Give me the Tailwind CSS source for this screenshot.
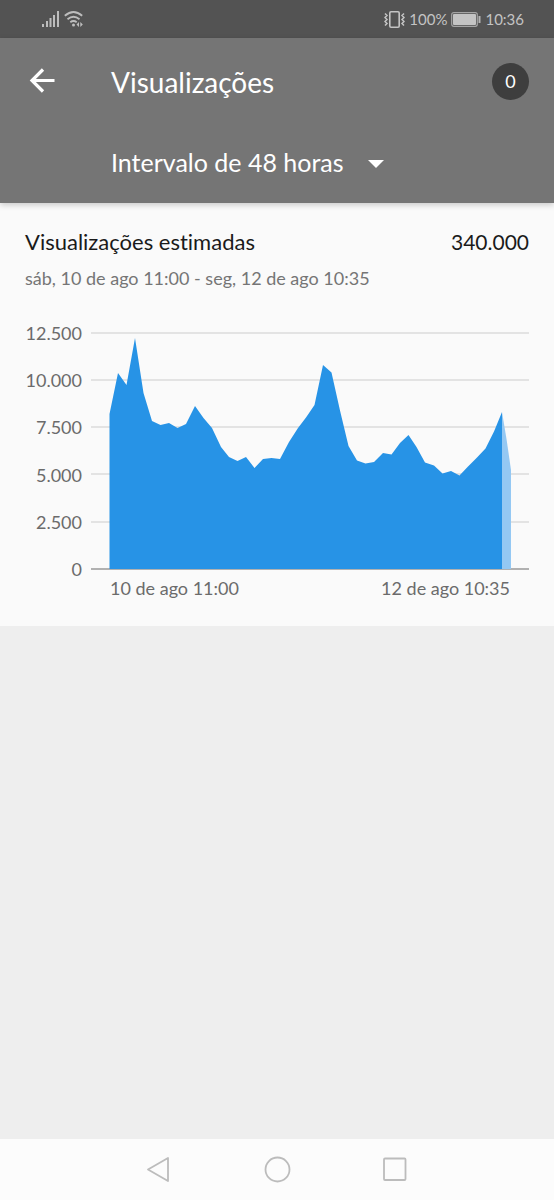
<!DOCTYPE html>
<html lang="pt-BR">
<head>
<meta charset="utf-8">
<meta name="viewport" content="width=device-width, initial-scale=1">
<title>Visualizações</title>
<script src="https://cdn.jsdelivr.net/npm/@tailwindcss/browser@4"></script>
</head>
<body class="flex min-h-screen flex-col bg-[#eeeeee] font-['Lato','Open_Sans',sans-serif] text-[#212121] [font-variant-ligatures:none]">
  <div class="flex h-[38px] items-center justify-between bg-[#535353] pr-[30px] pl-[42px] text-[15px] text-[#c4c4c4]">
    <div class="flex items-center gap-1">
      <svg class="h-4 w-[18px]" viewBox="0 0 18 16" fill="#bdbdbd" aria-label="Sinal"><path d="M0 13h2v3H0zM4 10h2v6H4zM7.500 7h2v9h-2zM11 4h2v12h-2zM15 0h2v16h-2z"/></svg>
      <svg class="h-4 w-5" viewBox="0 0 20 16" fill="none" stroke="#bdbdbd" stroke-width="1.800" aria-label="Wi-Fi"><path d="M0.800 4.800Q9.500-2.800 18.200 4.800M3.500 8.200q6-5 12 0M6.300 11.200q3.200-2.500 6.400 0"/><circle cx="9.500" cy="14" r="1.500" fill="#bdbdbd" stroke="none"/><path d="M15 11v5l-2.500-2.500zM16.300 11v5l2.500-2.500z" fill="#bdbdbd" stroke="none"/></svg>
    </div>
    <div class="flex items-center gap-1">
      <svg class="h-[17px] w-[21px]" viewBox="0 0 21 17" fill="none" stroke="#c4c4c4" aria-label="Vibrar"><rect x="5.800" y="0.800" width="9.400" height="15.400" rx="1.200" stroke-width="1.600"/><path d="M1 2.500l2 2-2 2 2 2-2 2 2 2-2 2M20 2.500l-2 2 2 2-2 2 2 2-2 2 2 2" stroke-width="1.500"/></svg>
      <span>100%</span>
      <svg class="h-[15px] w-[30px]" viewBox="0 0 30 15" fill="none" aria-label="Bateria"><rect x="0.700" y="0.700" width="25.600" height="13.600" rx="2" stroke="#a5a5a5" stroke-width="1.200"/><rect x="2" y="2" width="23" height="11" rx="1" fill="#c4c4c4"/><path d="M28.500 4v7" stroke="#b5b5b5" stroke-width="2"/></svg>
      <span>10:36</span>
    </div>
  </div>

  <header class="z-10 bg-[#757575] text-white shadow-[0_2px_6px_rgba(0,0,0,0.2)]">
    <div class="flex h-[86px] items-center pr-[25px] pl-[28px]">
      <button class="mr-14 flex h-10 w-[27px] items-center" aria-label="Voltar">
        <svg class="h-7 w-[27px]" viewBox="0 0 27 28" fill="none" stroke="currentColor" stroke-width="3.200"><path d="M26.500 13.500H4M15 2.500L4 13.500l11 11"/></svg>
      </button>
      <h1 class="flex-1 pt-0.5 text-[28px] leading-9">Visualizações</h1>
      <button class="flex size-[37px] items-center justify-center rounded-full bg-[#3e3e3e] text-lg">0</button>
    </div>
    <div class="flex h-[79px] items-center pb-1 pl-[111px]">
      <button class="flex items-center gap-6 text-[25px] leading-9">
        <span>Intervalo de 48 horas</span>
        <svg class="mt-1 h-2 w-4" viewBox="0 0 16 8" fill="currentColor"><path d="M0 0h16L8 8z"/></svg>
      </button>
    </div>
  </header>

  <main class="bg-[#fafafa] px-[25px] pt-6 pb-6">
    <div class="flex items-center justify-between leading-[30px] text-[#1a1a1a]">
      <h2 class="text-[22px]">Visualizações estimadas</h2>
      <span class="text-[21px]">340.000</span>
    </div>
    <p class="mt-[7px] text-lg leading-7 text-[#757575]">sáb, 10 de ago 11:00 - seg, 12 de ago 10:35</p>

    <div class="mt-[31px] flex text-lg text-[#6b6b6b]">
      <div class="flex h-[256px] w-[57px] flex-col justify-between text-right leading-5">
        <span>12.500</span><span>10.000</span><span>7.500</span><span>5.000</span><span>2.500</span><span>0</span>
      </div>
      <div class="ml-[9px] flex-1 pt-[9px]">
        <svg class="block h-[238px] w-full" viewBox="0 0 438 238" preserveAspectRatio="none" role="img" aria-label="Gráfico de visualizações">
          <path d="M0 1h438M0 48h438M0 95h438M0 142h438M0 190h438" stroke="#dcdcdc" stroke-width="1.500"/>
          <path d="M0 237h438" stroke="#999999" stroke-width="1.500"/>
          <path fill="#94c8f3" d="M411 237V80l4.500 27 4.500 31v99z"/>
          <path fill="#2793e6" d="M18.500 237V82L27 41l8.500 12L44 6l8.500 55L61 89l8.500 4 8.500-2 8.500 5 8.500-4 9-18 8.500 12 8.500 10 9 19 8 10 8.500 4 8.500-4 8.500 11 8.500-9 8.500-1 8.500 1 9-17 9-14 8-10.500 8.500-12.500 8.500-40 8.500 7.500 8.500 38 8.500 35.500 8.500 14.500 8.500 3 8.500-1.500 9-9 8.500 1.500 8.500-11.500 8.500-8 8 12 8.500 15.500 9 3 8.500 8 8.500-2.500 8.500 4.500 8.500-9 9-9 8.500-9 8.500-17L411 80v157z"/>
        </svg>
        <div class="mt-1 flex justify-between px-[19px] leading-7">
          <span>10 de ago 11:00</span><span>12 de ago 10:35</span>
        </div>
      </div>
    </div>
  </main>

  <nav class="mt-auto flex h-[61px] items-center justify-center gap-[91px] bg-[#fcfcfc] text-[#bcbcbc]">
    <button aria-label="Voltar"><svg class="size-[27px]" viewBox="0 0 27 27" fill="none" stroke="currentColor" stroke-width="1.800" stroke-linejoin="round"><path d="M2 13.500L22 2v23z"/></svg></button>
    <button aria-label="Início"><svg class="size-[27px]" viewBox="0 0 27 27" fill="none" stroke="currentColor" stroke-width="1.800"><circle cx="13.500" cy="13.500" r="12"/></svg></button>
    <button aria-label="Recentes"><svg class="size-[27px]" viewBox="0 0 27 27" fill="none" stroke="currentColor" stroke-width="1.800"><rect x="2" y="2.500" width="21.500" height="21.500" rx="1"/></svg></button>
  </nav>
</body>
</html>
